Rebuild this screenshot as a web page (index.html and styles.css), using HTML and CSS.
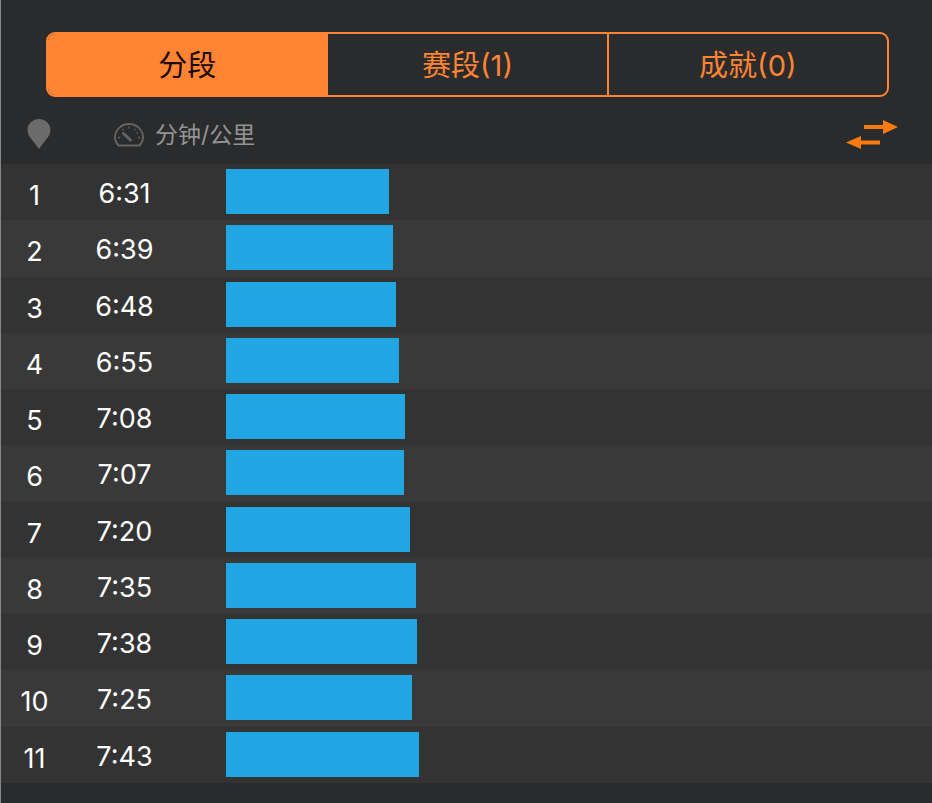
FILE: index.html
```html
<!DOCTYPE html>
<html lang="zh-CN">
<head>
  <meta charset="UTF-8" />
  <meta name="viewport" content="width=device-width, initial-scale=1.0"/>
  <title>分段</title>
  <link rel="stylesheet" href="styles.css">
</head>
<body>
  <nav class="tabs">
    <button class="tab active">分段</button>
    <button class="tab">赛段(1)</button>
    <button class="tab">成就(0)</button>
  </nav>

  <table class="splits">
    <colgroup>
      <col class="col-num">
      <col class="col-pace">
      <col>
    </colgroup>
    <thead>
      <tr>
        <th>
          <svg class="pin" width="24" height="32" viewBox="0 0 24 32" aria-hidden="true">
            <path d="M12 1C5.500 1 .5 6 .5 12c0 6 5.500 10.500 11.500 19 6-8.500 11.500-13 11.500-19C23.500 6 18.500 1 12 1z" fill="#6b6b6b"/>
          </svg>
        </th>
        <th colspan="2">
          <div class="pace-head">
            <svg class="gauge" width="30" height="24" viewBox="0 0 30 24" fill="none" stroke="#646464" aria-hidden="true">
              <path d="M4.500 22.500C2.500 20.500 1 18 1 14.500 1 7 7.300 1 15 1s14 6 14 13.500c0 3.500-1.500 6-3.500 8z" stroke-width="1.800" stroke-linejoin="round"/>
              <path d="M9.500 10.500l7 6.500" stroke-width="3" stroke-linecap="round"/>
              <path d="M15 3.500v2M8.500 6l.8 1.200M21.500 6l-.8 1.200M4 14.500h2M24 14.500h2M24 9.500l-1.500.8" stroke-width="1.400"/>
            </svg>
            <span>分钟/公里</span>
            <button class="swap" aria-label="切换">
              <svg width="52" height="32" viewBox="0 0 52 32" fill="#fb7a0e" aria-hidden="true">
                <path d="M18 6h19V1l15 7-15 7v-5H18z"/>
                <path d="M34 21.500H15V17L0 23.500 15 30v-4.500h19z"/>
              </svg>
            </button>
          </div>
        </th>
      </tr>
    </thead>
    <tbody>
      <tr><td class="num">1</td><td class="pace">6:31</td><td><div class="bar" style="width: 23.1%"></div></td></tr>
      <tr><td class="num">2</td><td class="pace">6:39</td><td><div class="bar" style="width: 23.6%"></div></td></tr>
      <tr><td class="num">3</td><td class="pace">6:48</td><td><div class="bar" style="width: 24.1%"></div></td></tr>
      <tr><td class="num">4</td><td class="pace">6:55</td><td><div class="bar" style="width: 24.5%"></div></td></tr>
      <tr><td class="num">5</td><td class="pace">7:08</td><td><div class="bar" style="width: 25.3%"></div></td></tr>
      <tr><td class="num">6</td><td class="pace">7:07</td><td><div class="bar" style="width: 25.2%"></div></td></tr>
      <tr><td class="num">7</td><td class="pace">7:20</td><td><div class="bar" style="width: 26%"></div></td></tr>
      <tr><td class="num">8</td><td class="pace">7:35</td><td><div class="bar" style="width: 26.9%"></div></td></tr>
      <tr><td class="num">9</td><td class="pace">7:38</td><td><div class="bar" style="width: 27.1%"></div></td></tr>
      <tr><td class="num">10</td><td class="pace">7:25</td><td><div class="bar" style="width: 26.3%"></div></td></tr>
      <tr><td class="num">11</td><td class="pace">7:43</td><td><div class="bar" style="width: 27.4%"></div></td></tr>
    </tbody>
  </table>
</body>
</html>
```
FILE: styles.css
```css
* {
  box-sizing: border-box;
}
body {
  margin: 0;
  min-height: 100vh;
  padding: 32px 0 20px;
  border-left: 1px solid #858687;
  background-color: #2a2b2c;
  color: #fff;
  font-family: Inter, "Noto Sans CJK SC", sans-serif;
}
button {
  margin: 0;
  padding: 0;
  border: 0;
  background: none;
  font: inherit;
  cursor: pointer;
}

/* segmented control */
.tabs {
  display: flex;
  height: 65px;
  margin: 0 43px 0 45px;
  border: 2px solid #ff8433;
  border-radius: 9px;
  overflow: hidden;
}
.tab {
  flex: 1;
  padding-bottom: 4px;
  color: #ff8433;
  font-size: 29px;
}
.tab + .tab {
  border-left: 2px solid #ff8433;
}
.tab.active {
  background-color: #ff8433;
  color: #200800;
}

/* splits table, rows share the rest of the window */
.splits {
  width: 100%;
  height: calc(100vh - 117px);
  border-collapse: collapse;
  table-layout: fixed;
}
.col-num {
  width: 67px;
}
.col-pace {
  width: 158px;
}
th,
td {
  padding: 0;
}
thead tr {
  height: 67px;
}
.pin {
  display: block;
  margin: 6px auto 0 26px;
}
.pace-head {
  display: flex;
  align-items: center;
  gap: 11px;
  margin: 8px 34px 0 46px;
  color: #949494;
  font-size: 23px;
  font-weight: 400;
  line-height: 32px;
}
.swap {
  margin-left: auto;
}
.swap svg {
  display: block;
}
tbody tr {
  background-color: #333;
}
tbody tr:nth-child(even) {
  background-color: #393939;
}
td {
  vertical-align: top;
}
.num,
.pace {
  font-size: 27px;
  line-height: 34px;
  text-align: center;
}
.num {
  padding-top: 15px;
}
.pace {
  padding: 13px 45px 0 0;
}
.bar {
  height: 45px;
  margin: 5px 0 6px;
  background-color: #20a6e2;
}
```
